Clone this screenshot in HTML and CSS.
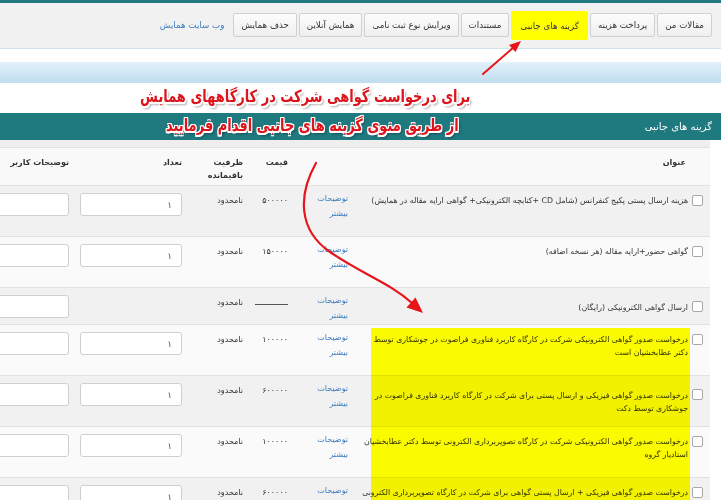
FILE: index.html
```html
<!DOCTYPE html>
<html lang="fa" dir="rtl">
<head>
<meta charset="utf-8">
<title>گزینه های جانبی</title>
<link rel="stylesheet" href="styles.css">
</head>
<body>
<div class="page">
  <div class="topline"></div>
  <nav class="toolbar">
    <a class="tab">مقالات من</a>
    <a class="tab">پرداخت هزینه</a>
    <a class="tab tab-hl">گزینه های جانبی</a>
    <a class="tab">مستندات</a>
    <a class="tab">ویرایش نوع ثبت نامی</a>
    <a class="tab">همایش آنلاین</a>
    <a class="tab">حذف همایش</a>
    <a class="site-link">وب سایت همایش</a>
  </nav>
  <div class="spacer"></div>
  <div class="bluebar"></div>
  <div class="gap"></div>
  <section class="panel">
    <div class="panel-head">گزینه های جانبی</div>
    <div class="tbl">
      <div class="strip"></div>
      <div class="row head">
        <div class="c-chk"></div>
        <div class="c-title">عنوان</div>
        <div class="c-link"></div>
        <div class="c-price">قیمت</div>
        <div class="c-cap">ظرفیت<br>باقیمانده</div>
        <div class="c-qty">تعداد</div>
        <div class="c-note">توضیحات کاربر</div>
      </div>

      <div class="row odd">
        <div class="c-chk"><input type="checkbox" class="chk"></div>
        <div class="c-title">هزینه ارسال پستی پکیج کنفرانس (شامل CD +کتابچه الکترونیکی+ گواهی ارایه مقاله در همایش)</div>
        <div class="c-link">توضیحات<br>بیشتر</div>
        <div class="c-price">۵۰۰۰۰۰</div>
        <div class="c-cap">نامحدود</div>
        <div class="c-qty"><input class="inp" value="۱"></div>
        <div class="c-note"><input class="inp inp-note"></div>
      </div>

      <div class="row even">
        <div class="c-chk"><input type="checkbox" class="chk"></div>
        <div class="c-title">گواهی حضور+ارایه مقاله (هر نسخه اضافه)</div>
        <div class="c-link">توضیحات<br>بیشتر</div>
        <div class="c-price">۱۵۰۰۰۰</div>
        <div class="c-cap">نامحدود</div>
        <div class="c-qty"><input class="inp" value="۱"></div>
        <div class="c-note"><input class="inp inp-note"></div>
      </div>

      <div class="row odd short">
        <div class="c-chk low"><input type="checkbox" class="chk"></div>
        <div class="c-title low">ارسال گواهی الکترونیکی (رایگان)</div>
        <div class="c-link">توضیحات<br>بیشتر</div>
        <div class="c-price"><span class="dash"></span></div>
        <div class="c-cap">نامحدود</div>
        <div class="c-qty"></div>
        <div class="c-note"><input class="inp inp-note"></div>
      </div>

      <div class="row even">
        <div class="c-chk"><input type="checkbox" class="chk"></div>
        <div class="c-title">درخواست صدور گواهی الکترونیکی شرکت در کارگاه کاربرد فناوری فراصوت در جوشکاری توسط دکتر عطابخشیان است</div>
        <div class="c-link">توضیحات<br>بیشتر</div>
        <div class="c-price">۱۰۰۰۰۰</div>
        <div class="c-cap">نامحدود</div>
        <div class="c-qty"><input class="inp" value="۱"></div>
        <div class="c-note"><input class="inp inp-note"></div>
      </div>

      <div class="row odd">
        <div class="c-chk low"><input type="checkbox" class="chk"></div>
        <div class="c-title low">درخواست صدور گواهی فیزیکی و ارسال پستی برای شرکت در کارگاه کاربرد فناوری فراصوت در جوشکاری توسط دکت</div>
        <div class="c-link">توضیحات<br>بیشتر</div>
        <div class="c-price">۶۰۰۰۰۰</div>
        <div class="c-cap">نامحدود</div>
        <div class="c-qty"><input class="inp" value="۱"></div>
        <div class="c-note"><input class="inp inp-note"></div>
      </div>

      <div class="row even">
        <div class="c-chk"><input type="checkbox" class="chk"></div>
        <div class="c-title">درخواست صدور گواهی الکترونیکی شرکت در کارگاه تصویربرداری الکترونی توسط دکتر عطابخشیان استادیار گروه</div>
        <div class="c-link">توضیحات<br>بیشتر</div>
        <div class="c-price">۱۰۰۰۰۰</div>
        <div class="c-cap">نامحدود</div>
        <div class="c-qty"><input class="inp" value="۱"></div>
        <div class="c-note"><input class="inp inp-note"></div>
      </div>

      <div class="row odd">
        <div class="c-chk"><input type="checkbox" class="chk"></div>
        <div class="c-title">درخواست صدور گواهی فیزیکی + ارسال پستی گواهی برای شرکت در کارگاه تصویربرداری الکترونی توسط دکتر عطابخشیان</div>
        <div class="c-link">توضیحات<br>بیشتر</div>
        <div class="c-price">۶۰۰۰۰۰</div>
        <div class="c-cap">نامحدود</div>
        <div class="c-qty"><input class="inp" value="۱"></div>
        <div class="c-note"><input class="inp inp-note"></div>
      </div>
    </div>
  </section>

  <div class="highlight"></div>
  <div class="note-red note1">برای درخواست گواهی شرکت در کارگاههای همایش</div>
  <div class="note-red note2">از طریق منوی گزینه های جانبی اقدام فرمایید</div>

  <svg class="arrows" width="721" height="500" viewBox="0 0 721 500">
    <path d="M483,74 L514,47" fill="none" stroke="#e8141b" stroke-width="2" stroke-linecap="round"/>
    <polygon points="521,41 515.5,52 509,45" fill="#e8141b"/>
    <path d="M316,163 C298,195 298,230 330,252 S390,283 412,303" fill="none" stroke="#e8141b" stroke-width="2.2" stroke-linecap="round"/>
    <polygon points="423,313 406.5,307.5 415.5,297.5" fill="#e8141b"/>
  </svg>
</div>
</body>
</html>
```

FILE: styles.css
```css
* {
  box-sizing: border-box;
  margin: 0;
  padding: 0;
}

html,
body {
  background: #ffffff;
}

body {
  font-family: "DejaVu Sans", sans-serif;
  font-size: 8px;
  color: #333333;
  direction: rtl;
  width: 721px;
  height: 500px;
  overflow: hidden;
}

.page {
  position: relative;
  width: 721px;
  height: 500px;
  overflow: hidden;
  background: #ffffff;
}

.topline {
  height: 3px;
  background: #23797f;
}

.toolbar {
  height: 46px;
  background: #f1f1f1;
  border-bottom: 1px solid #cfe5f1;
  display: flex;
  align-items: flex-start;
  gap: 2px;
  padding: 10px 9px 0 0;
}

.tab {
  height: 24px;
  padding: 0 7px;
  border: 1px solid #d0d0d0;
  border-radius: 2px;
  background: linear-gradient(#fcfcfc, #efefef);
  display: flex;
  align-items: center;
  font-size: 8.7px;
  color: #333333;
  white-space: nowrap;
}

.tab-hl {
  background: #ffff00;
  border-color: #ffff00;
  height: 29px;
  margin-top: -2px;
  padding: 0 8px;
}

.site-link {
  color: #3b7cc0;
  margin-right: 7px;
  height: 24px;
  display: flex;
  align-items: center;
  font-size: 8.7px;
  white-space: nowrap;
}

.spacer {
  height: 13px;
}

.bluebar {
  height: 21px;
  background: linear-gradient(#e3f1fa, #c0dcee);
}

.gap {
  height: 30px;
}

.panel {
  background: #ffffff;
}

.panel-head {
  height: 27px;
  background: #1f7a80;
  color: #ffffff;
  font-size: 10px;
  display: flex;
  align-items: center;
  padding-right: 9px;
}

.tbl {
  width: 754px;
  margin-right: 11px;
}

.strip {
  height: 8px;
  background: #eeeeee;
  border-bottom: 1px solid #e2e2e2;
}

.row {
  display: grid;
  grid-template-columns: 22px 332px 60px 45px 61px 114px 120px;
  height: 51px;
  border-bottom: 1px solid #e2e2e2;
}

.row.head {
  height: 38px;
  background: #f9f9f9;
  font-weight: bold;
}

.row.odd {
  background: #f1f1f1;
}

.row.even {
  background: #fafafa;
}

.row.short {
  height: 37px;
}

.c-chk {
  padding: 9px 7px 0 0;
}

.c-title {
  padding: 8px 0 0 4px;
  line-height: 13px;
  font-size: 7.8px;
}

.head .c-title {
  padding-right: 2px;
  font-size: 8px;
}

.c-chk.low {
  padding-top: 13px;
}

.c-title.low {
  padding-top: 13px;
}

.c-link {
  padding: 5px 8px 0 0;
  line-height: 15px;
  color: #3b7cc0;
}

.c-price,
.c-cap {
  padding: 8px 8px 0 0;
  line-height: 13px;
}

.c-qty {
  padding: 7px 8px 0 0;
  line-height: 13px;
}

.c-note {
  padding: 7px 7px 0 0;
  line-height: 13px;
}

.head .c-title,
.head .c-price,
.head .c-cap,
.head .c-qty,
.head .c-note {
  padding-top: 8px;
}

.chk {
  appearance: none;
  -webkit-appearance: none;
  display: block;
  width: 11px;
  height: 11px;
  border: 1px solid #a8a8a8;
  border-radius: 2px;
  background: #ffffff;
}

.inp {
  display: block;
  width: 102px;
  height: 23px;
  border: 1px solid #cfcfcf;
  border-radius: 3px;
  background: #ffffff;
  padding-right: 9px;
  font-family: "DejaVu Sans", sans-serif;
  font-size: 9px;
  color: #555555;
  direction: rtl;
  outline: none;
}

.inp-note {
  width: 116px;
}

.dash {
  display: inline-block;
  width: 33px;
  border-bottom: 1px solid #555555;
  margin-top: 6px;
}

.highlight {
  position: absolute;
  left: 371px;
  top: 328px;
  width: 319px;
  height: 172px;
  background: #ffff00;
  mix-blend-mode: multiply;
}

.note-red {
  position: absolute;
  font-family: "DejaVu Sans", sans-serif;
  font-weight: bold;
  font-size: 13px;
  line-height: 18px;
  color: #dc141c;
  white-space: nowrap;
  direction: rtl;
  transform: scaleY(1.3);
  text-shadow: 1px 1px 0 #fff, -1px -1px 0 #fff, 1px -1px 0 #fff, -1px 1px 0 #fff,
    0 1px 0 #fff, 0 -1px 0 #fff, 1px 0 0 #fff, -1px 0 0 #fff, 2px 2px 2px rgba(0, 0, 0, 0.35);
}

.note1 {
  left: 140px;
  top: 88px;
}

.note2 {
  left: 166px;
  top: 117px;
}

.arrows {
  position: absolute;
  left: 0;
  top: 0;
  pointer-events: none;
}
```
